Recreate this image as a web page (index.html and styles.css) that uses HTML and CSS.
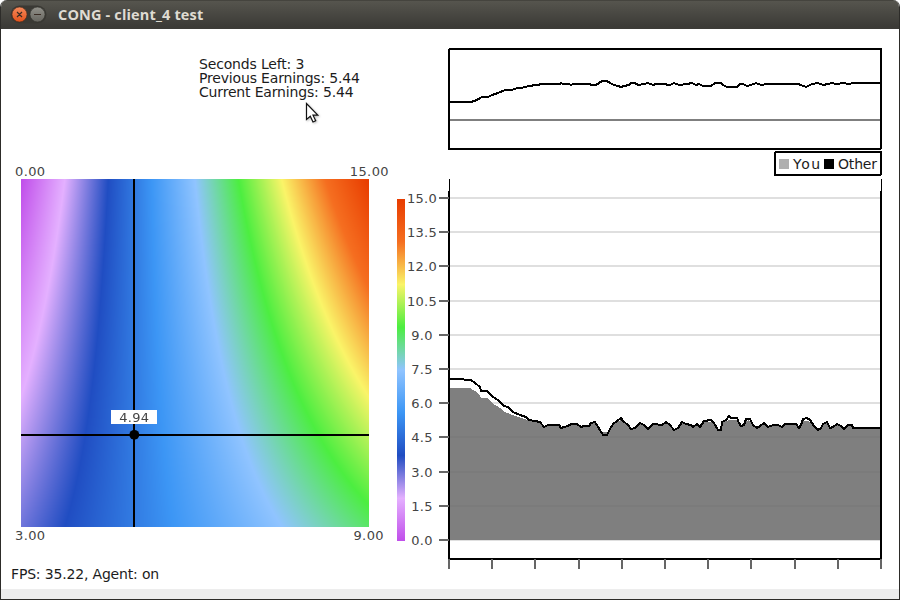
FILE: index.html
```html
<!DOCTYPE html>
<html lang="en">
<head>
<meta charset="utf-8">
<title>CONG - client_4 test</title>
<link rel="stylesheet" href="styles.css">
</head>
<body>
<div class="window">
  <header class="titlebar">
    <svg class="controls" width="42" height="26" viewBox="7 2 42 26">
      <defs>
        <linearGradient id="close" x1="0" y1="0" x2="0" y2="1"><stop offset="0" stop-color="#f58a5c"/><stop offset="1" stop-color="#e4521b"/></linearGradient>
        <linearGradient id="min" x1="0" y1="0" x2="0" y2="1"><stop offset="0" stop-color="#92918a"/><stop offset="1" stop-color="#66655f"/></linearGradient>
      </defs>
      <rect x="10.5" y="5.500" width="36" height="18" rx="9" fill="#3a3934"/>
      <circle cx="19.500" cy="14.500" r="7.500" fill="url(#close)" stroke="#4a2a1b" stroke-width=".6"/>
      <circle cx="37.500" cy="14.500" r="7.500" fill="url(#min)" stroke="#33322e" stroke-width=".6"/>
      <path d="M17 12l5 5M22 12l-5 5M34 14.500h7" stroke="#3a2c24" stroke-width="1.200" fill="none"/>
    </svg>
    <h1 class="title">CONG - client_4 test</h1>
  </header>
  <main class="content">
    <section class="left">
      <div class="status">
        <p class="s1">Seconds Left: 3</p>
        <p class="s2">Previous Earnings: 5.44</p>
        <p class="s3">Current Earnings: 5.44</p>
      </div>
      <div class="corners"><span>0.00</span><span>15.00</span></div>
      <div class="map">
        <canvas id="heat" width="348" height="348"></canvas>
        <svg class="cross" width="348" height="348" viewBox="21 179 348 348">
          <path d="M134 179V527M21 435H369" stroke="#000" stroke-width="2"/>
          <circle cx="134.300" cy="434.800" r="4.900"/>
          <rect x="111" y="410" width="46" height="14" fill="#fff"/>
          <text x="134.300" y="422" text-anchor="middle" class="num">4.94</text>
        </svg>
      </div>
      <div class="corners bottom"><span>3.00</span><span>9.00</span></div>
      <p class="fps">FPS: 35.22, Agent: on</p>
    </section>
    <svg class="charts" width="509" height="560" viewBox="390 29 509 560">
      <defs>
        <linearGradient id="scale" x1="0" y1="1" x2="0" y2="0">
          <stop offset="0" stop-color="#c04eea"/><stop offset=".125" stop-color="#e4b0ff"/>
          <stop offset=".25" stop-color="#204dc2"/><stop offset=".375" stop-color="#3c96f5"/>
          <stop offset=".5" stop-color="#90c4ff"/><stop offset=".625" stop-color="#4cee40"/>
          <stop offset=".75" stop-color="#faf468"/><stop offset=".875" stop-color="#f56e20"/>
          <stop offset="1" stop-color="#e83c00"/>
        </linearGradient>
      </defs>
      <rect x="397" y="199" width="8" height="342" fill="url(#scale)"/>
      <g class="crisp">
        <path d="M450 120H881" stroke="#7f7f7f" stroke-width="2"/>
        <rect x="449" y="49" width="432" height="100" rx="1" class="frame"/>
        <polyline class="line" points="449,102 471,102 474,101 477,100 481,97.500 488,97 492,95 498,93 504,90.500 512,90 516,88.500 523,87.500 529,86 536,85 543,84 560,84 561,83 563,84 569,84 571,85 573,84 589,84 592,85 596,85 599,83 602,81 607,81 610,83 614,85 618,86 621,87 624,86 629,85 631,83 635,83 638,85 644,84 648,83 653,85 656,84 663,84 670,85 674,83 679,85 687,84 692,83 696,85 699,84 703,86 711,86 715,83 721,83 723,85 727,87 737,87 740,84 743,84 747,86 751,85 756,83 761,85 767,84 798,84 801,85 806,87 812,84 818,83 823,85 828,84 832,83 836,84 844,83 848,84 854,83 881,83"/>
        <rect x="775" y="152" width="106" height="23" rx="1" class="frame"/>
        <rect x="779" y="159" width="10" height="10" fill="#afafaf"/>
        <rect x="824" y="159" width="10" height="10"/>
        <g id="grid"></g>
        <path fill="#7f7f7f" d="M450 388L470 388 475 391 480 395 481 398 487 398 492 403 500 408 505 412 515 416 525 419 530 421 540 423 544 427 548 425 559 425 561 428 564 427 568 426 571 424 577 424 581 427 584 426 589 426 591 423 595 423 598 428 601 432 607 432 610 429 613 424 617 422 621 420 623 421 628 425 631 429 635 428 640 423 644 425 648 429 653 424 662 425 666 422 670 425 674 430 678 428 682 422 686 424 691 425 693 427 697 424 700 427 704 422 711 422 714 423 718 430 721 430 723 422 729 420 737 420 739 423 741 426 744 425 746 421 749 420 753 425 757 428 760 426 764 423 768 427 773 425 778 425 782 427 785 424 796 424 799 428 803 421 808 421 814 426 818 430 821 428 823 424 827 422 830 428 833 427 837 424 841 426 844 429 848 425 852 425 853 428H881V540H450Z"/>
        <path d="M450 437H881M450 471.500H881M450 506H881" stroke="#7b7b7b" stroke-width="2"/>
        <path d="M449.500 179V192M881.500 179V192" stroke="#000"/>
        <path d="M449 191V559H881V191" class="frame"/>
        <polyline class="line" points="449,379 463,379 465,380 471,380 475,383 480,387 481,391 487,391 492,396 499,401 504,406 508,407 513,412 520,415 526,417 529,420 535,421 540,422 544,427 548,425 559,425 561,428 564,427 568,426 571,424 577,424 581,427 584,426 589,426 591,423 595,422 598,427 600,430 603,435 607,435 610,429 613,424 617,421 621,418 623,421 628,425 631,429 635,428 640,423 644,425 648,429 653,424 662,425 666,422 670,425 674,430 678,428 682,422 686,424 691,425 693,427 697,424 700,427 704,421 711,420 714,423 718,430 721,430 722,422 726,420 729,416 731,418 737,418 739,423 741,426 744,425 746,419 750,419 753,425 757,428 760,426 764,423 768,427 773,425 778,425 782,427 785,424 796,424 799,428 801,425 803,419 807,418 810,420 814,426 818,430 821,428 823,424 827,422 830,428 833,427 837,424 841,426 844,429 848,425 852,425 853,428 881,428"/>
        <g id="ticks"></g>
      </g>
      <g id="labels" class="num" text-anchor="middle"></g>
      <text x="793" y="169" class="legend" textLength="27">You</text>
      <text x="838" y="169" class="legend" textLength="39">Other</text>
    </svg>
  </main>
  <footer class="strip"></footer>
  <svg class="cursor" width="16" height="23" viewBox="0 0 16 23"><path d="M1.500 1.500V17.500L5.300 14.200 8 20 10.700 18.700 8 13.200H12.800Z" fill="#fff" stroke="#111" stroke-width="1.200"/></svg>
</div>
<script src="app.js"></script>
</body>
</html>
```
FILE: styles.css
```css
* { box-sizing: border-box; }
body { margin: 0; background: #fff; font-family: "DejaVu Sans", sans-serif; color: #1c1c1c; overflow: hidden; }
h1, p { margin: 0; }
.window { position: relative; width: 900px; height: 600px; display: flex; flex-direction: column; border: 1px solid #2d2c29; border-top: 0; border-radius: 7px 7px 0 0; overflow: hidden; background: #fff; }
.titlebar { height: 29px; flex: none; display: flex; align-items: center; padding: 0 0 0 6px; background: linear-gradient(#56554e, #3c3b37 90%); border-top: 1px solid #45443e; }
.controls { display: block; flex: none; }
.title { margin-left: 9px; font: bold 14.5px/28px "Open Sans", sans-serif; letter-spacing: .15px; color: #dfdbd2; white-space: nowrap; }
.content { height: 560px; flex: none; display: grid; grid-template-columns: 389px 509px; }
.left { display: flex; flex-direction: column; }
.status { height: 135px; padding: 28px 0 0 198px; font-size: 14px; line-height: 14px; letter-spacing: -.17px; white-space: nowrap; }
.corners { height: 15px; display: flex; justify-content: space-between; padding: 0 1px 0 14px; font-size: 13px; line-height: 15px; letter-spacing: .4px; color: #444; }
.corners.bottom { padding-right: 6px; height: 30px; line-height: 18px; }
.map { position: relative; width: 348px; height: 348px; margin-left: 20px; flex: none; }
.map canvas { display: block; }
.cross { position: absolute; left: 0; top: 0; }
.fps { padding: 8px 0 0 10px; font-size: 14px; line-height: 18px; letter-spacing: -.17px; white-space: nowrap; }
.charts { display: block; }
.crisp { shape-rendering: crispEdges; }
.frame, .line { fill: none; stroke: #000; stroke-width: 2; }
.num { font: 13px "DejaVu Sans", sans-serif; fill: #444; letter-spacing: .25px; }
.legend { font: 14px "DejaVu Sans", sans-serif; fill: #1c1c1c; }
.strip { flex: 1; background: #ededed; }
.cursor { position: absolute; left: 304px; top: 102px; filter: drop-shadow(1px 1px 1px #0004); }
```
FILE: app.js
```js
const stops = [[192,78,234],[228,176,255],[32,77,194],[60,150,245],[144,196,255],[76,238,64],[250,244,104],[245,110,32],[232,60,0]];
const ctx = document.getElementById('heat').getContext('2d');
const size = 348;
const img = ctx.createImageData(size, size);
for (let y = 0; y < size; y++) {
  for (let x = 0; x < size; x++) {
    const u = x / (size - 1), v = y / (size - 1);
    const t = (15 * u * (1 - v) + (3 + 6 * u) * v) / 15 * 8;
    const i = Math.min(7, Math.floor(t)), f = t - i, p = (y * size + x) * 4;
    for (let c = 0; c < 3; c++) img.data[p + c] = stops[i][c] + (stops[i + 1][c] - stops[i][c]) * f;
    img.data[p + 3] = 255;
  }
}
ctx.putImageData(img, 0, 0);

let grid = '', ticks = '', labels = '';
for (let k = 0; k <= 10; k++) {
  const y = Math.round(540 - 34.2 * k), x = Math.round(449 + 43.2 * k);
  grid += `<path d="M450 ${y}H881" stroke="#dfdfdf" stroke-width="2"/>`;
  ticks += `<path d="M439 ${y}H449M${x} 559V569" stroke="#666" stroke-width="2"/>`;
  labels += `<text x="422" y="${y + 5}">${(1.5 * k).toFixed(1)}</text>`;
}
document.getElementById('grid').innerHTML = grid;
document.getElementById('ticks').innerHTML = ticks;
document.getElementById('labels').innerHTML = labels;
```
